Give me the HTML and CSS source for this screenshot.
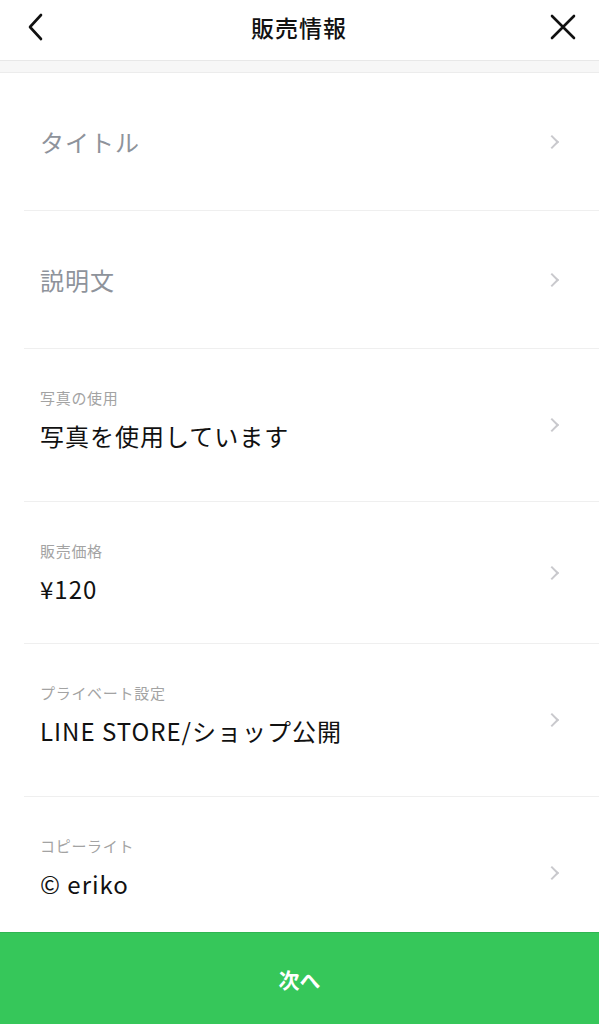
FILE: index.html
```html
<!DOCTYPE html>
<html lang="ja">
<head>
  <meta charset="UTF-8">
  <title>販売情報</title>
  <link rel="stylesheet" href="styles.css">
</head>
<body>
  <div class="page">
    <header class="topbar">
      <button class="icon-btn" aria-label="戻る">
        <svg width="16" height="28" viewBox="0 0 16 28"><path d="M14 2 L3 14 L14 26" fill="none" stroke="#111" stroke-width="2.6" stroke-linecap="round" stroke-linejoin="round"/></svg>
      </button>
      <h1 class="topbar-title">販売情報</h1>
      <button class="icon-btn" aria-label="閉じる">
        <svg width="26" height="26" viewBox="0 0 26 26"><path d="M2 2 L24 24 M24 2 L2 24" fill="none" stroke="#111" stroke-width="2.6" stroke-linecap="round"/></svg>
      </button>
    </header>
    <div class="strip"></div>

    <div class="list">
      <div class="row row-single">
        <div class="row-text"><span class="placeholder">タイトル</span></div>
        <span class="chevron"></span>
      </div>
      <div class="row row-single">
        <div class="row-text"><span class="placeholder">説明文</span></div>
        <span class="chevron"></span>
      </div>
      <div class="row row-tall">
        <div class="row-text row-text-top">
          <div class="label">写真の使用</div>
          <div class="value">写真を使用しています</div>
        </div>
        <span class="chevron"></span>
      </div>
      <div class="row row-mid">
        <div class="row-text row-text-top">
          <div class="label">販売価格</div>
          <div class="value">¥120</div>
        </div>
        <span class="chevron"></span>
      </div>
      <div class="row row-tall">
        <div class="row-text row-text-top">
          <div class="label">プライベート設定</div>
          <div class="value">LINE STORE/ショップ公開</div>
        </div>
        <span class="chevron"></span>
      </div>
      <div class="row row-tall">
        <div class="row-text row-text-top">
          <div class="label">コピーライト</div>
          <div class="value">© eriko</div>
        </div>
        <span class="chevron"></span>
      </div>
    </div>

    <button class="next-btn">次へ</button>
  </div>
</body>
</html>
```

FILE: styles.css
```css
* {
  box-sizing: border-box;
}

body {
  margin: 0;
  font-family: "Noto Sans CJK JP", sans-serif;
  background: #fff;
  color: #111;
}

.page {
  display: flex;
  flex-direction: column;
  height: 100vh;
  overflow: hidden;
}

.topbar {
  display: flex;
  align-items: center;
  justify-content: space-between;
  height: 61px;
  padding: 0 22px 6px 21px;
  border-bottom: 1px solid #e8e8e8;
  flex-shrink: 0;
}

.icon-btn {
  background: none;
  border: none;
  padding: 0;
  width: 28px;
  height: 28px;
  display: flex;
  align-items: center;
  justify-content: center;
  cursor: pointer;
}

.topbar-title {
  margin: 0;
  font-size: 23px;
  font-weight: 500;
  letter-spacing: 1px;
  color: #111;
}

.strip {
  height: 12px;
  background: #f7f7f7;
  border-bottom: 1px solid #ececec;
  flex-shrink: 0;
}

.list {
  flex: 1;
  overflow: hidden;
  margin-left: 24px;
}

.row {
  display: flex;
  align-items: center;
  padding: 0 40px 0 16px;
  border-bottom: 1px solid #efefef;
}

.row-single {
  height: 138px;
}

.row-tall {
  height: 153px;
}

.row-mid {
  height: 142px;
}

.row-text {
  flex: 1;
}

.row-text-top {
  align-self: flex-start;
  padding-top: 39px;
}

.placeholder {
  font-size: 24px;
  color: #8e939b;
  letter-spacing: 1px;
}

.label {
  font-size: 15px;
  line-height: 20px;
  color: #a3a3a3;
  letter-spacing: 0.7px;
  margin-bottom: 13px;
}

.value {
  font-size: 24px;
  line-height: 30px;
  letter-spacing: 1px;
  color: #111;
}

.chevron {
  width: 10px;
  height: 10px;
  border-top: 2px solid #c9c9cd;
  border-right: 2px solid #c9c9cd;
  transform: rotate(45deg);
  margin-right: 2px;
}

.next-btn {
  flex-shrink: 0;
  height: 92px;
  width: 100%;
  border: none;
  border-top: 1px solid #2fb552;
  background: #36c75a;
  color: #fff;
  font-family: "Noto Sans CJK JP", sans-serif;
  font-size: 21px;
  font-weight: bold;
  cursor: pointer;
}
```
